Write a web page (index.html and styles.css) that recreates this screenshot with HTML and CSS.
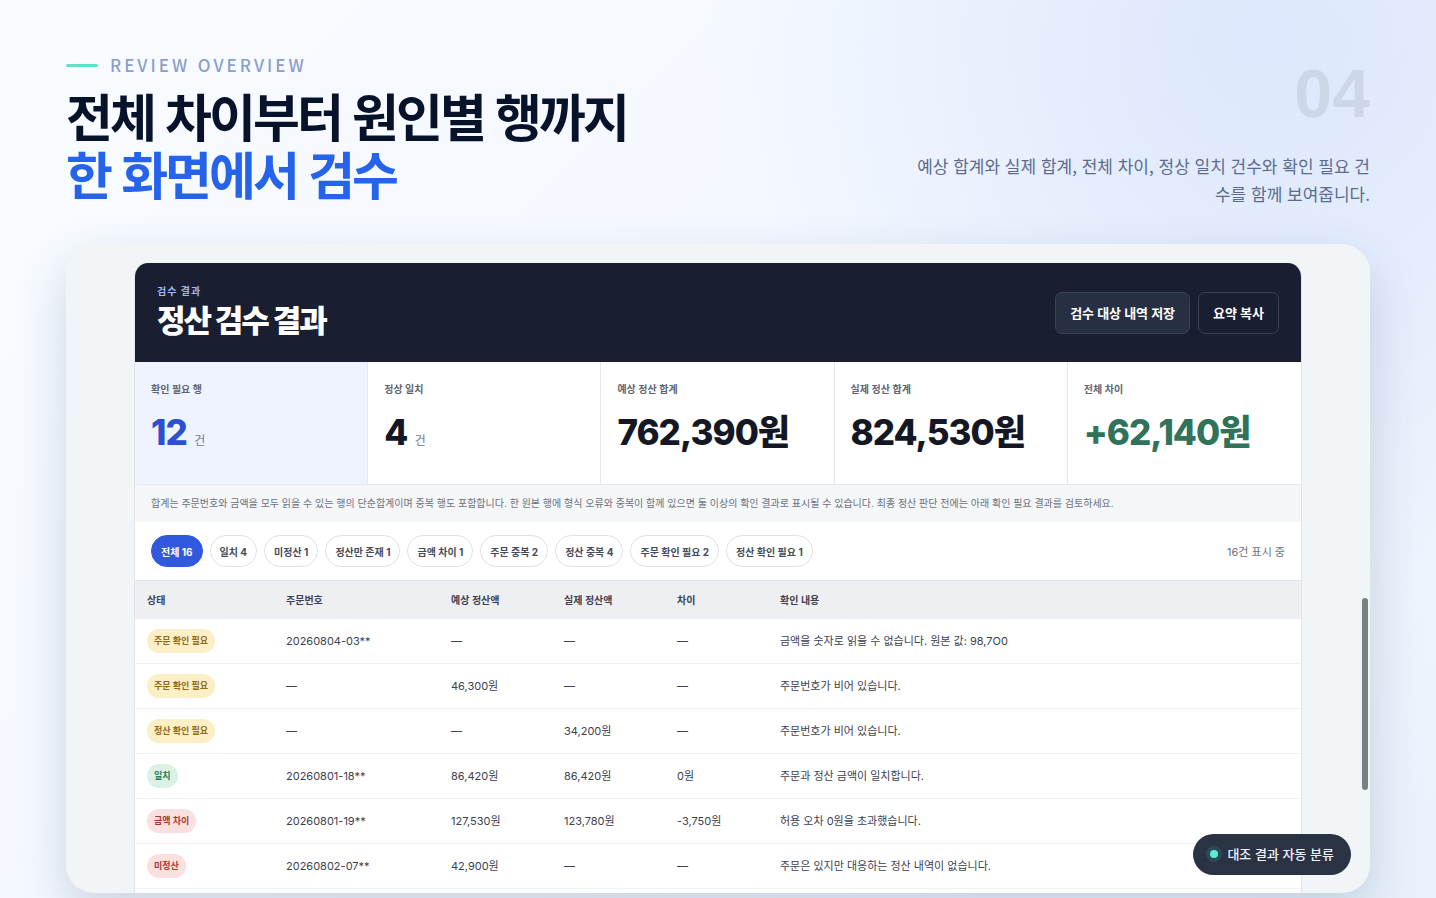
FILE: index.html
```html
<!DOCTYPE html>
<html lang="ko">
  <head>
    <meta charset="utf-8" />
    <meta name="viewport" content="width=device-width, initial-scale=1" />
    <title>정산 검수 결과</title>
    <link rel="stylesheet" href="styles.css">
  </head>
  <body>
    <main class="slide">
      <header class="slide-header">
        <div class="intro">
          <p class="eyebrow">REVIEW OVERVIEW</p>
          <h1 class="title">전체 차이부터 원인별 행까지<br><span>한 화면에서 검수</span></h1>
        </div>
        <div class="summary">
          <div class="number">04</div>
          <p class="description">예상 합계와 실제 합계, 전체 차이, 정상 일치 건수와 확인 필요 건수를 함께 보여줍니다.</p>
        </div>
      </header>

      <div class="frame">
        <section class="panel">
          <div class="panel-header">
            <div>
              <p class="panel-label">검수 결과</p>
              <h2 class="panel-title">정산 검수 결과</h2>
            </div>
            <div class="actions">
              <button type="button" class="action filled">검수 대상 내역 저장</button>
              <button type="button" class="action">요약 복사</button>
            </div>
          </div>

          <div class="metrics">
            <div class="metric highlight">
              <p>확인 필요 행</p>
              <strong>12</strong> <small>건</small>
            </div>
            <div class="metric">
              <p>정상 일치</p>
              <strong>4</strong> <small>건</small>
            </div>
            <div class="metric">
              <p>예상 정산 합계</p>
              <strong>762,390원</strong>
            </div>
            <div class="metric">
              <p>실제 정산 합계</p>
              <strong>824,530원</strong>
            </div>
            <div class="metric positive">
              <p>전체 차이</p>
              <strong>+62,140원</strong>
            </div>
          </div>

          <p class="note">합계는 주문번호와 금액을 모두 읽을 수 있는 행의 단순합계이며 중복 행도 포함합니다. 한 원본 행에 형식 오류와 중복이 함께 있으면 둘 이상의 확인 결과로 표시될 수 있습니다. 최종 정산 판단 전에는 아래 확인 필요 결과를 검토하세요.</p>

          <div class="filters">
            <button type="button" class="filter active">전체 16</button>
            <button type="button" class="filter">일치 4</button>
            <button type="button" class="filter">미정산 1</button>
            <button type="button" class="filter">정산만 존재 1</button>
            <button type="button" class="filter">금액 차이 1</button>
            <button type="button" class="filter">주문 중복 2</button>
            <button type="button" class="filter">정산 중복 4</button>
            <button type="button" class="filter">주문 확인 필요 2</button>
            <button type="button" class="filter">정산 확인 필요 1</button>
            <span class="count">16건 표시 중</span>
          </div>

          <table class="results">
            <colgroup>
              <col class="col-status">
              <col class="col-order">
              <col class="col-amount">
              <col class="col-amount">
              <col class="col-diff">
              <col>
            </colgroup>
            <thead>
              <tr>
                <th>상태</th>
                <th>주문번호</th>
                <th>예상 정산액</th>
                <th>실제 정산액</th>
                <th>차이</th>
                <th>확인 내용</th>
              </tr>
            </thead>
            <tbody>
              <tr>
                <td><span class="badge warning">주문 확인 필요</span></td>
                <td>20260804-03**</td>
                <td>—</td>
                <td>—</td>
                <td>—</td>
                <td>금액을 숫자로 읽을 수 없습니다. 원본 값: 98,7O0</td>
              </tr>
              <tr>
                <td><span class="badge warning">주문 확인 필요</span></td>
                <td>—</td>
                <td>46,300원</td>
                <td>—</td>
                <td>—</td>
                <td>주문번호가 비어 있습니다.</td>
              </tr>
              <tr>
                <td><span class="badge warning">정산 확인 필요</span></td>
                <td>—</td>
                <td>—</td>
                <td>34,200원</td>
                <td>—</td>
                <td>주문번호가 비어 있습니다.</td>
              </tr>
              <tr>
                <td><span class="badge success">일치</span></td>
                <td>20260801-18**</td>
                <td>86,420원</td>
                <td>86,420원</td>
                <td>0원</td>
                <td>주문과 정산 금액이 일치합니다.</td>
              </tr>
              <tr>
                <td><span class="badge danger">금액 차이</span></td>
                <td>20260801-19**</td>
                <td>127,530원</td>
                <td>123,780원</td>
                <td>-3,750원</td>
                <td>허용 오차 0원을 초과했습니다.</td>
              </tr>
              <tr>
                <td><span class="badge danger">미정산</span></td>
                <td>20260802-07**</td>
                <td>42,900원</td>
                <td>—</td>
                <td>—</td>
                <td>주문은 있지만 대응하는 정산 내역이 없습니다.</td>
              </tr>
            </tbody>
          </table>
        </section>
        <div class="scroll-thumb"></div>
        <div class="status-pill"><span class="dot"></span>대조 결과 자동 분류</div>
      </div>
    </main>
  </body>
</html>
```
FILE: styles.css
```css
* {
  box-sizing: border-box;
}

body {
  margin: 0;
  font-family: "Noto Sans CJK KR", sans-serif;
  color: #07132b;
  background:
    radial-gradient(circle at 88% 4%, rgba(205, 220, 250, 0.6), rgba(205, 220, 250, 0) 36%),
    linear-gradient(135deg, #f8fcff 0%, #f4f8ff 50%, #e9f2fc 100%);
}

h1,
h2,
p {
  margin: 0;
}

button {
  font-family: inherit;
  cursor: pointer;
}

.slide {
  display: flex;
  flex-direction: column;
  height: 100vh;
  padding: 52px 66px 5px;
  overflow: hidden;
}

.slide-header {
  display: flex;
  justify-content: space-between;
  height: 192px;
  flex-shrink: 0;
}

.eyebrow {
  display: flex;
  align-items: center;
  gap: 12px;
  font-size: 17px;
  font-weight: 500;
  line-height: 26px;
  letter-spacing: 3px;
  color: #8c9fc8;
}

.eyebrow::before {
  content: "";
  width: 32px;
  height: 3px;
  border-radius: 2px;
  background: #63e0ca;
}

.title {
  margin-top: 8px;
  font-size: 51px;
  font-weight: 700;
  line-height: 58px;
  letter-spacing: -3px;
}

.title span {
  color: #2563eb;
}

.summary {
  width: 456px;
  text-align: right;
}

.number {
  margin-top: 8px;
  font-family: "Liberation Sans", sans-serif;
  font-size: 68px;
  font-weight: 700;
  line-height: 66px;
  color: #ced7e8;
}

.description {
  margin-top: 26px;
  font-size: 17px;
  line-height: 28px;
  word-break: break-all;
  color: #5c6b8c;
}

.frame {
  position: relative;
  display: flex;
  flex: 1;
  min-height: 0;
  padding: 19px 68px 0;
  border-radius: 28px;
  background: #f2f5f7;
  box-shadow: 0 20px 50px rgba(40, 65, 110, 0.2);
}

.panel {
  flex: 1;
  min-width: 0;
  overflow: hidden;
  border: 1px solid #e2e5ea;
  border-top: 0;
  border-bottom: 0;
  border-radius: 14px 14px 0 0;
  background: #fff;
  font-family: Inter, "Noto Sans CJK KR", sans-serif;
  color: #3c4151;
}

.panel-header {
  display: flex;
  align-items: center;
  justify-content: space-between;
  height: 99px;
  padding: 0 22px;
  background: #191f31;
}

.panel-label {
  font-size: 10px;
  font-weight: 700;
  line-height: 16px;
  letter-spacing: 1px;
  color: #a5b4fc;
}

.panel-title {
  font-size: 31px;
  font-weight: 800;
  line-height: 44px;
  letter-spacing: -2px;
  color: #fff;
}

.actions {
  display: flex;
  gap: 8px;
}

.action {
  height: 42px;
  padding: 0 14px;
  border: 1px solid #3a4153;
  border-radius: 7px;
  background: transparent;
  font-size: 13px;
  font-weight: 700;
  color: #fff;
}

.action.filled {
  background: #272f42;
}

.metrics {
  display: grid;
  grid-template-columns: repeat(5, 1fr);
  height: 123px;
  border-bottom: 1px solid #e4e7ec;
}

.metric {
  padding: 18px 16px;
  border-right: 1px solid #e6e8ed;
  white-space: nowrap;
}

.metric:last-child {
  border-right: 0;
}

.metric p {
  font-size: 10px;
  font-weight: 600;
  line-height: 18px;
  color: #5f6472;
}

.metric strong {
  display: inline-block;
  margin-top: 9px;
  font-size: 35px;
  font-weight: 800;
  line-height: 50px;
  letter-spacing: -1px;
  color: #141824;
}

.metric small {
  margin-left: 3px;
  font-size: 12px;
  color: #747987;
}

.metric.highlight {
  background: #eff3ff;
}

.metric.highlight strong {
  color: #2d50cf;
}

.metric.positive strong {
  color: #31735a;
}

.note {
  height: 37px;
  padding: 0 16px;
  background: #f4f6f8;
  font-size: 10px;
  line-height: 36px;
  white-space: nowrap;
  color: #6d7280;
}

.filters {
  display: flex;
  align-items: center;
  gap: 7px;
  height: 58px;
  padding: 0 16px;
}

.filter {
  height: 32px;
  padding: 0 9px;
  border: 1px solid #dfe1e6;
  border-radius: 16px;
  background: #fff;
  font-size: 10px;
  font-weight: 700;
  white-space: nowrap;
  color: #464b5b;
}

.filter.active {
  border-color: #3159df;
  background: #3159df;
  color: #fff;
}

.count {
  margin-left: auto;
  font-size: 11px;
  color: #6d7280;
}

.results {
  width: 100%;
  table-layout: fixed;
  border-collapse: collapse;
}

.col-status {
  width: 139px;
}

.col-order {
  width: 165px;
}

.col-amount {
  width: 113px;
}

.col-diff {
  width: 103px;
}

.results th,
.results td {
  padding: 0 12px;
  line-height: 16px;
  text-align: left;
  white-space: nowrap;
}

.results th {
  height: 38px;
  border-top: 1px solid #e4e6eb;
  background: #eeeff3;
  font-size: 10px;
  font-weight: 600;
}

.results td {
  height: 45px;
  border-bottom: 1px solid #f1f2f4;
  font-size: 11px;
}

.badge {
  display: inline-block;
  padding: 0 7px;
  border-radius: 12px;
  font-size: 9px;
  font-weight: 700;
  line-height: 24px;
  vertical-align: middle;
}

.badge.warning {
  background: #fbefc6;
  color: #916a1c;
}

.badge.success {
  background: #daf1e6;
  color: #2c7c5d;
}

.badge.danger {
  background: #fae1df;
  color: #b1352f;
}

.scroll-thumb {
  position: absolute;
  top: 354px;
  right: 2px;
  width: 6px;
  height: 192px;
  border-radius: 3px;
  background: #7b7f82;
}

.status-pill {
  position: absolute;
  right: 19px;
  bottom: 18px;
  display: flex;
  align-items: center;
  gap: 9px;
  height: 41px;
  padding: 0 17px 2px;
  border-radius: 21px;
  background: #2a3343;
  font-size: 13px;
  font-weight: 500;
  line-height: 20px;
  color: #eef3fb;
}

.dot {
  width: 8px;
  height: 8px;
  border-radius: 50%;
  background: #5eead4;
  box-shadow: 0 0 0 4px #2c4a55;
}
```
